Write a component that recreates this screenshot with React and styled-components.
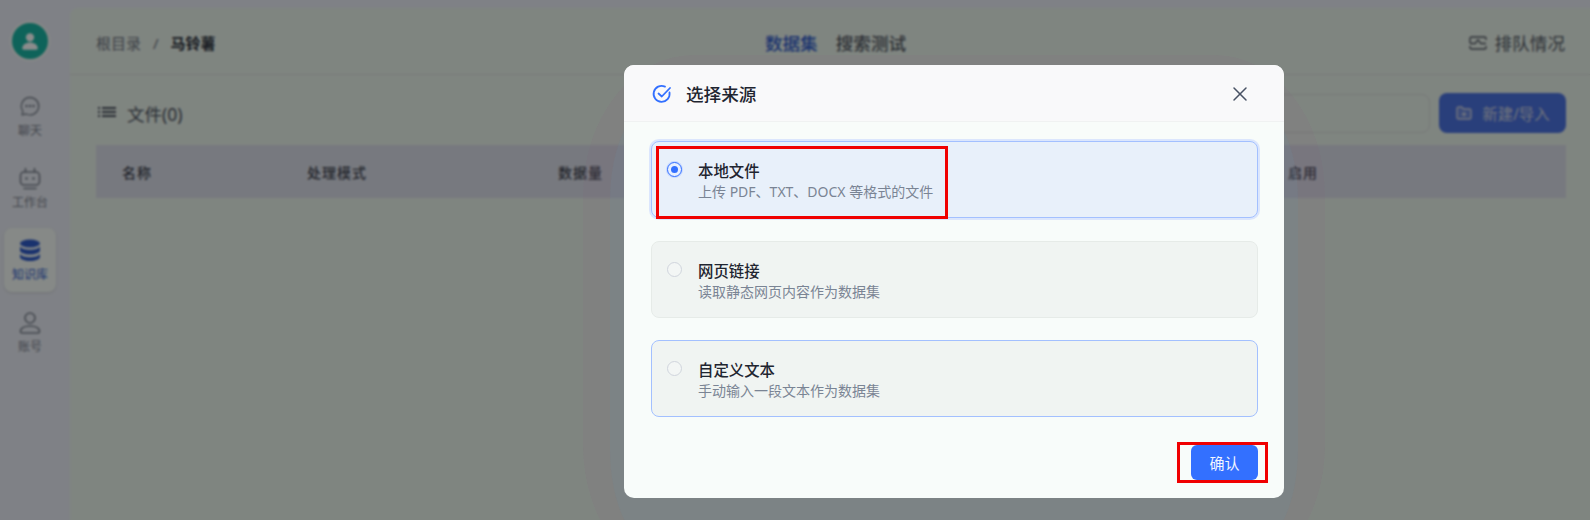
import React from 'react';

import styled, { createGlobalStyle } from 'styled-components';
import { X } from 'lucide-react';

const BLUE = '#3370ff';
const FONT = '"Noto Sans", "Noto Sans CJK SC", sans-serif';

const GlobalStyle = createGlobalStyle`
  html, body {
    height: 520px;
    margin: 0;
    overflow: hidden;
  }

  body {
    font-family: ${FONT};
  }

  * {
    box-sizing: border-box;
  }
`;

const Page = styled.div`
  background-color: #e8ecf4;
  display: flex;
  height: 520px;
  overflow: hidden;
  position: relative;
  width: 1590px;
`;

const Sidebar = styled.nav`
  align-items: center;
  display: flex;
  flex: 0 0 70px;
  flex-direction: column;
  gap: 8px;
  padding: 23px 10px 0 0;
`;

const Avatar = styled.div`
  align-items: center;
  background-color: #1bb5a4;
  border-radius: 50%;
  box-shadow: 0 0 0 2px #f4f6f4;
  color: #fff;
  display: flex;
  height: 36px;
  justify-content: center;
  margin-bottom: 17px;
  width: 36px;
`;

const NavItem = styled.div`
  align-items: center;
  background-color: ${({ $active }) => ($active ? '#f4faf6' : 'transparent')};
  border-radius: 8px;
  box-shadow: ${({ $active }) => ($active ? '0 1px 3px rgba(0, 0, 0, 0.12)' : 'none')};
  color: ${({ $active }) => ($active ? '#2f5bc8' : '#7c838f')};
  display: flex;
  flex-direction: column;
  font-size: 12px;
  height: 64px;
  justify-content: center;
  line-height: 16px;
  width: 52px;
`;

const NavIcon = styled.svg`
  display: block;
  height: 26px;
  margin-bottom: 4px;
  width: 26px;
`;

const Main = styled.main`
  background-color: #e8f2ea;
  border-top-left-radius: 8px;
  display: flex;
  flex: 1;
  flex-direction: column;
  margin-top: 8px;
`;

const TopBar = styled.header`
  align-items: center;
  border-bottom: 1px solid #d8e0da;
  display: grid;
  flex: 0 0 67px;
  grid-template-columns: 1fr auto 1fr;
  padding: 3px 25px 0 26px;
`;

const Breadcrumb = styled.div`
  align-items: center;
  color: #6e7580;
  display: flex;
  font-size: 15px;
`;

const Separator = styled.span`
  margin: 0 12px;
`;

const CurrentCrumb = styled.span`
  color: #2e343e;
  font-weight: 600;
`;

const Tabs = styled.div`
  display: flex;
  gap: 18px;
  margin-left: 10px;
`;

const Tab = styled.span`
  color: ${({ $active }) => ($active ? '#2f5bc8' : '#545a64')};
  font-size: 17.6px;
  font-weight: 500;
`;

const QueueStatus = styled.div`
  align-items: center;
  color: #545a64;
  display: flex;
  font-size: 17.6px;
  gap: 8px;
  justify-content: flex-end;
`;

const Content = styled.section`
  padding: 17px 24px 0 26px;
`;

const Toolbar = styled.div`
  align-items: center;
  display: flex;
  height: 42px;
`;

const FileTitle = styled.div`
  align-items: center;
  color: #4c5260;
  display: flex;
  flex: 1;
  font-size: 17.5px;
  gap: 10px;
`;

const ListIcon = styled.svg`
  display: block;
  margin: -2px 0 0 1px;
`;

const SearchBox = styled.div`
  border: 1px solid #d5ddd8;
  border-radius: 8px;
  height: 39px;
  margin-right: 9px;
  width: 300px;
`;

const NewButton = styled.div`
  align-items: center;
  background-color: #4c73e0;
  border-radius: 8px;
  color: #cfd5e4;
  display: flex;
  font-size: 15.4px;
  gap: 9px;
  height: 40px;
  justify-content: center;
  width: 127px;
`;

const TableHead = styled.div`
  background-color: #d9dde7;
  color: #3f4450;
  display: grid;
  font-size: 14px;
  font-weight: 500;
  grid-template-columns: 185px 251px 730px 1fr;
  height: 53px;
  letter-spacing: 1px;
  line-height: 55px;
  margin-top: 11px;
  padding-left: 26px;
`;

const Overlay = styled.div`
  backdrop-filter: blur(0.8px);
  background-color: rgba(0, 0, 0, 0.45);
  inset: 0;
  padding: 65px 0 0 624px;
  position: absolute;

  /* two pale bands of the dialog's halo that show on either side of it */
  &::before {
    background-color: rgba(132, 93, 113, 0.1);
    border-radius: 110px / 140px;
    content: '';
    height: 530px;
    left: 583px;
    position: absolute;
    top: 55px;
    width: 742px;
  }

  &::after {
    background-color: rgba(101, 142, 158, 0.15);
    border-radius: 50px / 100px;
    content: '';
    height: 450px;
    left: 610px;
    position: absolute;
    top: 100px;
    width: 688px;
  }
`;

const Modal = styled.div`
  background-color: #f8fcfa;
  border-radius: 10px;
  height: 433px;
  overflow: hidden;
  position: relative;
  width: 660px;
  z-index: 1;
`;

const ModalHeader = styled.div`
  align-items: center;
  background-color: #f9f9fa;
  border-bottom: 1px solid #f0f2f2;
  color: #1f2530;
  display: flex;
  font-size: 17.6px;
  font-weight: 500;
  gap: 13px;
  height: 57px;
  padding: 1px 32px 0 27px;
`;

const ModalTitle = styled.span`
  flex: 1;
`;

const CloseIcon = styled(X)`
  color: #485264;
  display: block;
`;

const OptionList = styled.div`
  display: flex;
  flex-direction: column;
  gap: 22.5px;
  padding: 19px 26px 0 27px;
`;

const Option = styled.div`
  background-color: ${({ $selected }) => ($selected ? '#e8f0fa' : '#f0f4f2')};
  border: 1px solid ${({ $selected, $hovered }) => ($selected || $hovered ? '#a3c0ff' : '#e6ebe8')};
  border-radius: 8px;
  box-shadow: ${({ $selected }) => ($selected ? '0 0 0 2px #dbe6fd' : 'none')};
  display: flex;
  height: 77px;
  padding: 20px 0 0 15px;
`;

const Radio = styled.span`
  align-items: center;
  background-color: ${({ $selected }) => ($selected ? '#e8f0ff' : '#f3f6f5')};
  border: 1px solid ${({ $selected }) => ($selected ? BLUE : '#d0d5dd')};
  border-radius: 50%;
  box-shadow: ${({ $selected }) => ($selected ? '0 0 0 1px #c5d7ff' : 'none')};
  display: flex;
  flex: 0 0 15px;
  height: 15px;
  justify-content: center;
  margin-right: 16px;

  &::after {
    background-color: ${BLUE};
    border-radius: 50%;
    content: '';
    display: ${({ $selected }) => ($selected ? 'block' : 'none')};
    height: 7px;
    width: 7px;
  }
`;

const OptionText = styled.div`
  display: flex;
  flex-direction: column;
`;

const OptionTitle = styled.span`
  color: #1f2530;
  font-size: 15.4px;
  font-weight: 500;
  line-height: 20px;
`;

const OptionDesc = styled.span`
  color: #7a8494;
  font-size: 14px;
  line-height: 20px;
`;

const ConfirmButton = styled.div`
  align-items: center;
  background-color: ${BLUE};
  border-radius: 6px;
  bottom: 18px;
  color: #f2f6ff;
  display: flex;
  font-size: 15px;
  height: 35px;
  justify-content: center;
  position: absolute;
  right: 26px;
  width: 67px;
`;

const Annotation = styled.div`
  border: 3px solid #f00000;
  height: ${({ $h }) => $h}px;
  left: ${({ $x }) => $x}px;
  pointer-events: none;
  position: absolute;
  top: ${({ $y }) => $y}px;
  width: ${({ $w }) => $w}px;
  z-index: 2;
`;

const OPTIONS = [
  { title: '本地文件', desc: '上传 PDF、TXT、DOCX 等格式的文件', selected: true },
  { title: '网页链接', desc: '读取静态网页内容作为数据集' },
  { title: '自定义文本', desc: '手动输入一段文本作为数据集', hovered: true },
];

const App = () => (
  <>
    <GlobalStyle />
    <Page>
      <Sidebar>
        <Avatar>
          <svg width="22" height="22" viewBox="0 0 24 24" fill="currentColor">
            <circle cx="12" cy="8" r="4.5" />
            <path d="M3.5 20c0-4 4-6.5 8.5-6.5s8.500 2.500 8.500 6.500c0 1-.8 1.500-1.500 1.500H5c-.8 0-1.500-.5-1.500-1.500z" />
          </svg>
        </Avatar>
        <NavItem>
          <NavIcon viewBox="0 0 26 26" fill="none" stroke="currentColor" strokeWidth="1.3">
            <path d="M13 4.500a8.700 8.700 0 1 1-3.800 16.500L5 21.800l.9-3.700A8.700 8.700 0 0 1 13 4.500z" strokeLinejoin="round" />
            <circle cx="9.500" cy="13" r=".6" fill="currentColor" />
            <circle cx="13" cy="13" r=".6" fill="currentColor" />
            <circle cx="16.500" cy="13" r=".6" fill="currentColor" />
          </NavIcon>
          聊天
        </NavItem>
        <NavItem>
          <NavIcon viewBox="0 0 26 26" fill="none" stroke="currentColor" strokeWidth="1.600">
            <rect x="3.500" y="7" width="19" height="13" rx="3.500" />
            <path d="M8.500 7V3.500M17.500 7V3.500M7 23.500h12" strokeLinecap="round" />
            <circle cx="9.500" cy="13.500" r="1.200" fill="currentColor" stroke="none" />
            <circle cx="16.500" cy="13.500" r="1.200" fill="currentColor" stroke="none" />
          </NavIcon>
          工作台
        </NavItem>
        <NavItem $active>
          <NavIcon viewBox="0 0 26 26" fill="currentColor">
            <ellipse cx="13" cy="6.500" rx="10" ry="4" />
            <path d="M3 9.500c1.500 2.200 5.500 3.300 10 3.300s8.500-1.100 10-3.300v4c0 2.300-4.500 4-10 4s-10-1.700-10-4z" />
            <path d="M3 17c1.500 2.200 5.500 3.300 10 3.300S21.500 19.200 23 17v3c0 2.300-4.500 4-10 4S3 22.300 3 20z" />
          </NavIcon>
          知识库
        </NavItem>
        <NavItem>
          <NavIcon viewBox="0 0 26 26" fill="none" stroke="currentColor" strokeWidth="1.600">
            <circle cx="13" cy="9" r="5" />
            <path d="M3.500 22.500c0-3.500 4.300-5.500 9.500-5.500s9.500 2 9.500 5.500c0 1-.7 1.500-1.500 1.500H5c-.8 0-1.500-.5-1.500-1.500z" />
          </NavIcon>
          账号
        </NavItem>
      </Sidebar>
      <Main>
        <TopBar>
          <Breadcrumb>
            根目录
            <Separator>/</Separator>
            <CurrentCrumb>马铃薯</CurrentCrumb>
          </Breadcrumb>
          <Tabs>
            <Tab $active>数据集</Tab>
            <Tab>搜索测试</Tab>
          </Tabs>
          <QueueStatus>
            <svg width="18" height="18" viewBox="0 0 18 18" fill="none" stroke="currentColor" strokeWidth="1.400">
              <path d="M1 9V4.500C1 3.700 1.700 3 2.500 3h13c.8 0 1.500.7 1.500 1.500V6" />
              <path d="M17 12v1.500c0 .8-.7 1.500-1.500 1.500h-13C1.700 15 1 14.300 1 13.500V12" />
              <path d="M1 9.500h5c1.500 0 1.500-3.500 3-3.500s1.500 3.500 3 3.500h5" />
            </svg>
            排队情况
          </QueueStatus>
        </TopBar>
        <Content>
          <Toolbar>
            <FileTitle>
              <ListIcon width="20" height="20" viewBox="0 0 20 20" fill="currentColor">
                <rect x="1" y="5" width="2" height="2" />
                <rect x="1" y="9" width="2" height="2" />
                <rect x="1" y="13" width="2" height="2" />
                <rect x="5" y="5" width="14" height="2" />
                <rect x="5" y="9" width="14" height="2" />
                <rect x="5" y="13" width="14" height="2" />
              </ListIcon>
              文件(0)
            </FileTitle>
            <SearchBox />
            <NewButton>
              <svg width="18" height="18" viewBox="0 0 18 18" fill="none" stroke="currentColor" strokeWidth="1.400">
                <path d="M2 4.500C2 3.700 2.700 3 3.500 3h3.300l1.700 2h6c.8 0 1.500.7 1.500 1.500v7c0 .8-.7 1.500-1.500 1.500h-11C2.700 15 2 14.300 2 13.500z" fill="currentColor" fillOpacity="0.25" />
                <path d="M9 8v4.500M6.800 10.200h4.400" />
              </svg>
              新建/导入
            </NewButton>
          </Toolbar>
          <TableHead>
            <span>名称</span>
            <span>处理模式</span>
            <span>数据量</span>
            <span>启用</span>
          </TableHead>
        </Content>
      </Main>
      <Overlay>
        <Modal>
          <ModalHeader>
            <svg width="22" height="22" viewBox="0 0 22 22" fill="none" stroke={BLUE} strokeWidth="1.800" strokeLinecap="round" strokeLinejoin="round">
              <path d="M18.500 9.500A8 8 0 1 1 14 3.600" />
              <path d="M7.500 10.500l3.300 3L19 5" />
            </svg>
            <ModalTitle>选择来源</ModalTitle>
            <CloseIcon size={24} strokeWidth={1.500} />
          </ModalHeader>
          <OptionList>
            {OPTIONS.map(({ title, desc, selected, hovered }) => (
              <Option key={title} $selected={selected} $hovered={hovered}>
                <Radio $selected={selected} />
                <OptionText>
                  <OptionTitle>{title}</OptionTitle>
                  <OptionDesc>{desc}</OptionDesc>
                </OptionText>
              </Option>
            ))}
          </OptionList>
          <ConfirmButton>确认</ConfirmButton>
        </Modal>
        <Annotation $x={656} $y={146} $w={292} $h={73} />
        <Annotation $x={1177} $y={442} $w={91} $h={41} />
      </Overlay>
    </Page>
  </>
);

export default App;
